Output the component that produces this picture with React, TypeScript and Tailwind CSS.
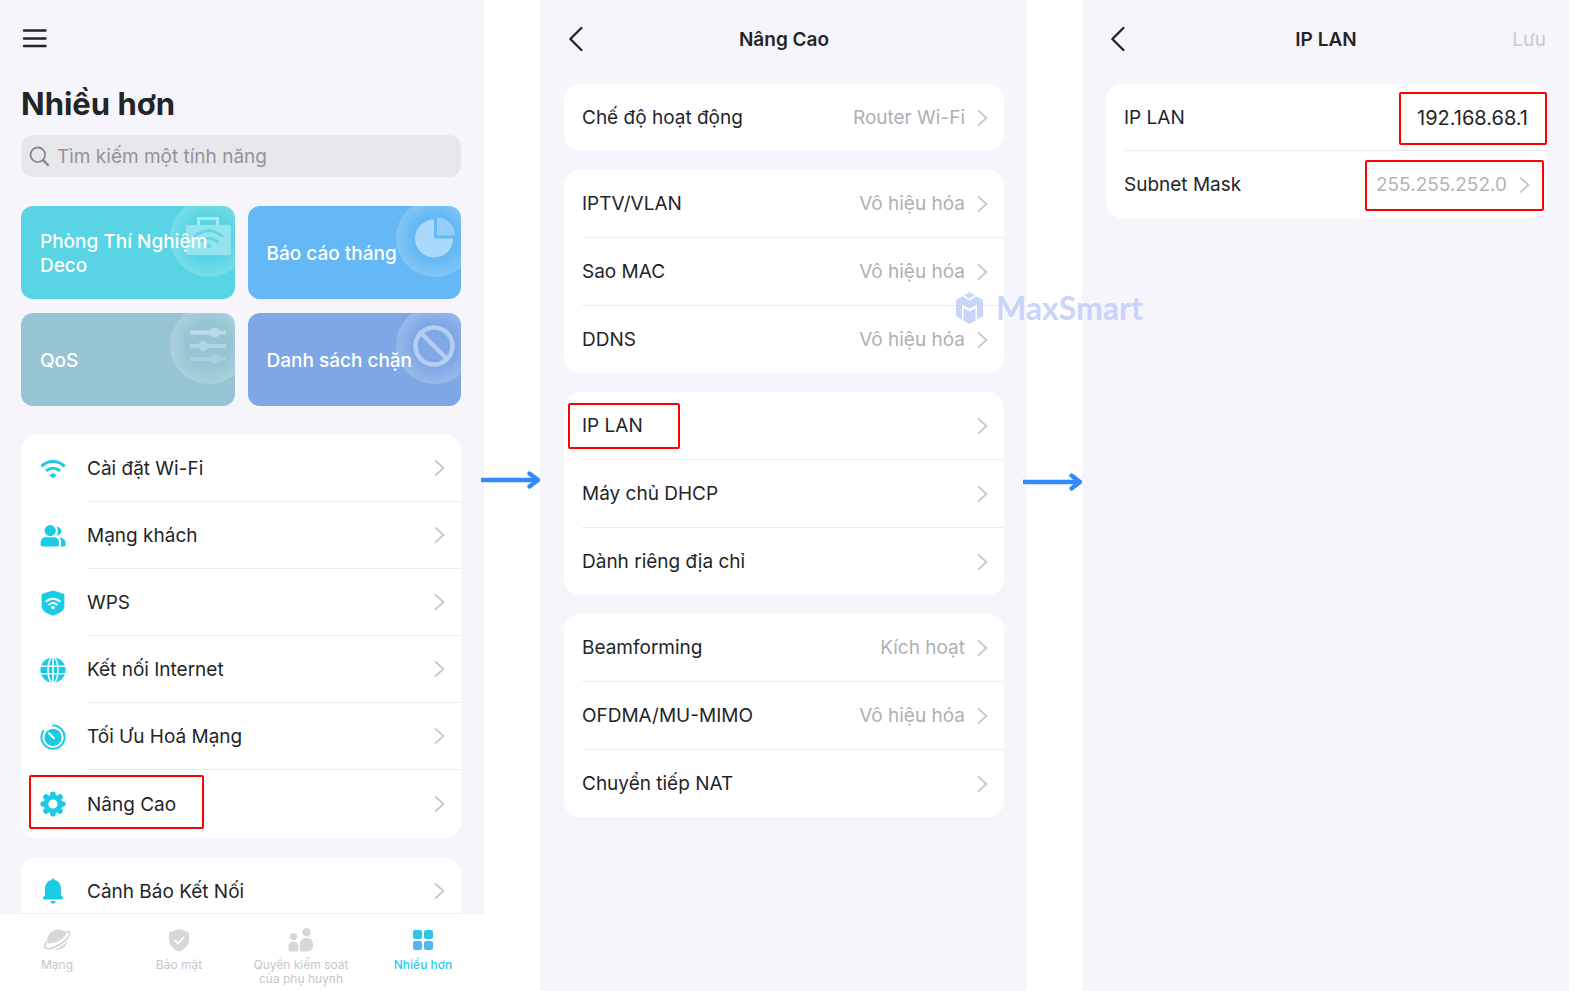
import React from "react";

type RowData = {
  label: string;
  value?: string;
  icon?: React.ReactNode;
  marked?: boolean;
};

const WifiIcon = () => (
  <svg width="26" height="26" viewBox="0 0 26 26" fill="none" stroke="#1acbe6" strokeWidth="3">
    <path d="M1.4 10.4C8.3 3.9 17.7 3.9 24.6 10.4" />
    <path d="M6 14.9C10.2 11.2 15.8 11.2 20 14.9" />
    <path d="M13 22.6L9.6 19.3C11.4 16.8 14.6 16.8 16.4 19.3Z" fill="#1acbe6" stroke="none" />
  </svg>
);

const GuestIcon = () => (
  <svg width="26" height="26" viewBox="0 0 26 26" fill="#1acbe6">
    <circle cx="10.2" cy="7.6" r="5.6" />
    <path d="M5.5 14.2H14.2C17.3 14.2 19 16.6 19 19.4V21.4C19 22.6 18.3 23.4 17.2 23.4H2.4C1.2 23.4 .6 22.6 .6 21.4V19.4C.6 16.6 2.5 14.2 5.5 14.2Z" />
    <path d="M16.8 3.6C19.4 3.9 21.3 5.8 21.3 8.2C21.3 10.6 19.4 12.4 16.6 12.6C18.1 10 18.2 6.4 16.8 3.6Z" />
    <path d="M19.4 14.4C23.2 14.6 25.6 16.8 25.6 20V21.6C25.6 22.8 25 23.4 23.8 23.4H20.6C21 22.6 21.1 21.8 21.1 20.8V19.4C21.1 17.4 20.6 15.7 19.4 14.4Z" />
  </svg>
);

const ShieldWifiIcon = () => (
  <svg width="26" height="26" viewBox="0 0 26 26" fill="none">
    <path d="M13 .5L23 3.6C24 4 24.4 4.6 24.4 5.6V16C24.4 21 18 24.2 13 25.8C8 24.2 1.6 21 1.6 16V5.6C1.6 4.6 2 4 3 3.6Z" fill="#1acbe6" />
    <path d="M5.6 11.8C10 7.7 16 7.7 20.4 11.8M8.7 14.9C11.3 12.6 14.7 12.6 17.3 14.9" stroke="#fff" strokeWidth="2" />
    <circle cx="13" cy="17.6" r="1.8" fill="#fff" />
  </svg>
);

const GlobeIcon = () => (
  <svg width="26" height="26" viewBox="0 0 26 26" fill="none">
    <circle cx="13" cy="13" r="12.6" fill="#1acbe6" />
    <g stroke="#fff" strokeWidth="1.5">
      <ellipse cx="13" cy="13" rx="5" ry="13" />
      <path d="M13 0V26M0 9.2H26M0 16.8H26" />
    </g>
  </svg>
);

const OptimizeIcon = () => (
  <svg width="26" height="26" viewBox="0 0 26 26" fill="none">
    <circle cx="13" cy="13.4" r="8.6" fill="#1acbe6" />
    <path d="M12.4 1.6A11.6 11.6 0 1 1 3.6 6.4" stroke="#1acbe6" strokeWidth="2" />
    <path d="M9.2 9.4L14 14.2" stroke="#fff" strokeWidth="2.2" strokeLinecap="round" />
  </svg>
);

const GearIcon = () => (
  <svg width="26" height="26" viewBox="0 0 26 26" fill="none">
    <g stroke="#1acbe6" strokeWidth="5.6" strokeLinecap="round">
      <path d="M13 3.2V22.8M3.2 13H22.8M6 6L20 20M20 6L6 20" />
    </g>
    <circle cx="13" cy="13" r="9.4" fill="#1acbe6" />
    <circle cx="13" cy="13" r="4.6" fill="#fff" />
  </svg>
);

const BellIcon = () => (
  <svg width="26" height="26" viewBox="0 0 26 26" fill="#1acbe6">
    <path d="M13 .4C13.9 .4 14.5 1 14.5 2C18.6 2.9 21 6.2 21 10.6V17.2L22.8 19.2C23.4 20.2 22.9 21.4 21.6 21.4H4.4C3.1 21.4 2.6 20.2 3.2 19.2L5 17.2V10.6C5 6.2 7.4 2.9 11.5 2C11.5 1 12.1 .4 13 .4Z" />
    <path d="M10.4 23H15.6C15.4 24.8 14.4 25.6 13 25.6S10.6 24.8 10.4 23Z" />
  </svg>
);

const Chevron = () => (
  <svg className="shrink-0" width="11" height="18" viewBox="0 0 11 18" fill="none" stroke="#c6c7ca" strokeWidth="1.8">
    <path d="M1 1.4L9.4 9L1 16.6" />
  </svg>
);

const BackIcon = () => (
  <svg width="15" height="26" viewBox="0 0 15 26" fill="none" stroke="#1f2528" strokeWidth="2.4" strokeLinecap="round" strokeLinejoin="round">
    <path d="M13.4 2L2.4 13L13.4 24" />
  </svg>
);

// Pale disc in the tile corner, the glyph is drawn over it
const TileArt = ({ id, children }: { id: string; children: React.ReactNode }) => (
  <svg className="absolute right-0 top-0" width="65" height="72" viewBox="0 0 65 72" fill="none">
    <defs>
      <radialGradient id={id}>
        <stop offset="0.55" stopColor="#fff" stopOpacity="0" />
        <stop offset="1" stopColor="#fff" stopOpacity="0.2" />
      </radialGradient>
    </defs>
    <circle cx="39" cy="32" r="39" fill={`url(#${id})`} />
    {children}
  </svg>
);

const tiles = [
  {
    label: "Phòng Thí Nghiệm Deco",
    bg: "bg-[#58d4e4]",
    art: (
      <TileArt id="lab">
        <path d="M28.5 20V12.5H47.5V20" stroke="#a9e9f2" strokeWidth="3" />
        <rect x="16" y="19" width="45" height="30" rx="3" fill="#94e4ee" />
        <path d="M24 31C33 22.5 44 22.5 53 31M29 36.5C35 31 42 31 48 36.5" stroke="#62d6e5" strokeWidth="3" />
        <circle cx="38.5" cy="40" r="2.5" fill="#62d6e5" />
      </TileArt>
    ),
  },
  {
    label: "Báo cáo tháng",
    bg: "bg-[#63b8f5]",
    art: (
      <TileArt id="report">
        <path d="M38 13.5A19 19 0 1 0 57 32.5H38Z" fill="#abd9fa" />
        <path d="M41 11.5A18 18 0 0 1 59 29.5H41Z" fill="#94cef9" />
      </TileArt>
    ),
  },
  {
    label: "QoS",
    bg: "bg-[#97c5d3]",
    art: (
      <TileArt id="qos">
        <g stroke="#bcdbe8" strokeWidth="4">
          <path d="M20 19.5H56" />
          <path d="M20 33H56" opacity="0.75" />
          <path d="M20 46H56" opacity="0.45" />
        </g>
        <circle cx="45" cy="19.5" r="5" fill="#bcdbe8" />
        <circle cx="33" cy="33" r="5" fill="#b3d5e3" />
        <circle cx="45" cy="46" r="5" fill="#a8cfdd" />
      </TileArt>
    ),
  },
  {
    label: "Danh sách chặn",
    bg: "bg-[#7fa7e5]",
    art: (
      <TileArt id="block">
        <circle cx="38" cy="33" r="18.5" stroke="#b5cdf3" strokeWidth="4.5" />
        <path d="M25 20L51 46" stroke="#b5cdf3" strokeWidth="4.5" />
      </TileArt>
    ),
  },
];

const menuRows: RowData[] = [
  { label: "Cài đặt Wi-Fi", icon: <WifiIcon /> },
  { label: "Mạng khách", icon: <GuestIcon /> },
  { label: "WPS", icon: <ShieldWifiIcon /> },
  { label: "Kết nối Internet", icon: <GlobeIcon /> },
  { label: "Tối Ưu Hoá Mạng", icon: <OptimizeIcon /> },
  { label: "Nâng Cao", icon: <GearIcon />, marked: true },
];

const advancedGroups: RowData[][] = [
  [{ label: "Chế độ hoạt động", value: "Router Wi-Fi" }],
  [
    { label: "IPTV/VLAN", value: "Vô hiệu hóa" },
    { label: "Sao MAC", value: "Vô hiệu hóa" },
    { label: "DDNS", value: "Vô hiệu hóa" },
  ],
  [
    { label: "IP LAN", marked: true },
    { label: "Máy chủ DHCP" },
    { label: "Dành riêng địa chỉ" },
  ],
  [
    { label: "Beamforming", value: "Kích hoạt" },
    { label: "OFDMA/MU-MIMO", value: "Vô hiệu hóa" },
    { label: "Chuyển tiếp NAT" },
  ],
];

const tabs = [
  {
    label: "Mạng",
    icon: (
      <svg width="28" height="24" viewBox="0 0 28 24" fill="none">
        <path d="M4.5 15C3 8 8 1.5 15 1.5C19 1.5 22 3 23.5 5.5C22 10 13 16.5 4.5 15Z" fill="#d5d7d8" />
        <path d="M22.5 4C27 2.6 28 5 25 9.4C20.5 15.4 9 21.6 3.6 20.4C.6 19.4 1.4 16.4 4 13.4" stroke="#d5d7d8" strokeWidth="1.8" />
        <path d="M12 21.5C17 19.5 21.5 16.5 24.5 13C23.5 18.5 18 22.8 12 21.5Z" fill="#d5d7d8" />
      </svg>
    ),
  },
  {
    label: "Bảo mật",
    icon: (
      <svg width="28" height="24" viewBox="0 0 28 24" fill="none">
        <path d="M14 1L23 4C23.6 4.2 24 4.7 24 5.4V12C24 18 19 21.5 14 23.5C9 21.5 4 18 4 12V5.4C4 4.7 4.4 4.2 5 4Z" fill="#d5d7d8" />
        <path d="M9.5 12L13 15.5L19 9" stroke="#fff" strokeWidth="1.8" />
      </svg>
    ),
  },
  {
    label: "Quyền kiểm soát của phụ huynh",
    icon: (
      <svg width="28" height="24" viewBox="0 0 28 24" fill="#d5d7d8">
        <circle cx="6.5" cy="8.5" r="3.6" />
        <circle cx="19.5" cy="4.2" r="4.2" />
        <path d="M1.5 22.5V19C1.5 15.5 3.5 13.4 6.5 13.4C9.3 13.4 11.4 15.5 11.4 19V22.5Q11.4 23.5 10.4 23.5H2.5Q1.5 23.5 1.5 22.5Z" />
        <path d="M12.8 22V16.5C12.8 12.6 15.5 9.8 19.5 9.8C23.5 9.8 26.2 12.8 26.2 16.7C26.2 20.6 23.6 23.5 20 23.5H14.3Q12.8 23.5 12.8 22Z" />
      </svg>
    ),
  },
  {
    label: "Nhiều hơn",
    active: true,
    icon: (
      <svg width="28" height="24" viewBox="0 0 28 24">
        <rect x="4" y="2" width="9" height="9" rx="2" fill="#2dc6e9" />
        <rect x="15" y="2" width="9" height="9" rx="2" fill="#2dc6e9" />
        <rect x="4" y="13" width="9" height="9" rx="2" fill="#52b6f5" />
        <rect x="15" y="13" width="9" height="9" rx="2" fill="#52b6f5" />
      </svg>
    ),
  },
];

function MenuRow({ row, divided }: { row: RowData; divided: boolean }) {
  return (
    <li className="relative">
      <button
        type="button"
        className={`flex w-full items-center pl-[19px] text-left ${divided ? "h-[67px]" : "h-[68px]"}`}
      >
        <span className="w-[47px] shrink-0">{row.icon}</span>
        <span
          className={`flex h-full flex-1 items-center justify-between pr-4 ${
            divided ? "border-b border-[#ececee]" : ""
          }`}
        >
          <span className="pt-0.5">{row.label}</span>
          <Chevron />
        </span>
      </button>
      {row.marked && (
        <span className="pointer-events-none absolute left-2 top-[5px] h-[54px] w-[175px] rounded-xs border-2 border-[#ff0000]" />
      )}
    </li>
  );
}

function SettingRow({ row, divided }: { row: RowData; divided: boolean }) {
  return (
    <li className="relative pl-[18px]">
      <button
        type="button"
        className={`flex w-full items-center gap-3 pr-4 text-left ${
          divided ? "h-[68px] border-b border-[#ececee]" : "h-[67px]"
        }`}
      >
        <span className="flex-1 pt-0.5">{row.label}</span>
        {row.value && <span className="pt-0.5 text-[#aeb0b3]">{row.value}</span>}
        <Chevron />
      </button>
      {row.marked && (
        <span className="pointer-events-none absolute left-1 top-[11px] h-[46px] w-28 rounded-xs border-2 border-[#ff0000]" />
      )}
    </li>
  );
}

function StepArrow({ className }: { className: string }) {
  return (
    <div className="relative z-10">
      <svg
        className={`absolute right-0 ${className}`}
        width="60"
        height="18"
        viewBox="0 0 60 18"
        fill="none"
        stroke="#338aff"
        strokeWidth="4.4"
      >
        <path d="M1 9H57" />
        <path d="M49.5 2.6L58 9L49.5 15.4" strokeLinecap="round" strokeLinejoin="round" />
      </svg>
    </div>
  );
}

function MoreScreen() {
  return (
    <section className="flex h-screen flex-col bg-[#f6f5fb]">
      <div className="flex-1 overflow-hidden pl-[21px] pr-[23px] pt-6">
        <button type="button" aria-label="Menu" className="block">
          <svg width="28" height="28" viewBox="0 0 28 28" stroke="#1f2528" strokeWidth="2.4" strokeLinecap="round">
            <path d="M3 6.5H24.5M3 14.5H24.5M3 22H24.5" />
          </svg>
        </button>
        <h1 className="mt-8 text-[31px] font-bold leading-10">Nhiều hơn</h1>
        <label className="mt-[11px] flex h-[42px] items-center gap-[7px] rounded-xl bg-[#e8e7ec] px-2">
          <svg width="21" height="21" viewBox="0 0 21 21" fill="none" stroke="#86888c" strokeWidth="1.8">
            <circle cx="8.8" cy="8.8" r="7.3" />
            <path d="M14 14L19.6 19.6" strokeWidth="2.4" />
          </svg>
          <input
            type="search"
            aria-label="Tìm kiếm"
            placeholder="Tìm kiếm một tính năng"
            className="flex-1 bg-transparent pt-0.5 outline-none placeholder:text-[#929398]"
          />
        </label>

        <div className="mt-[29px] grid grid-cols-2 gap-x-[13px] gap-y-3.5">
          {tiles.map((tile) => (
            <button
              key={tile.label}
              type="button"
              className={`relative flex h-[93px] items-center overflow-hidden rounded-xl pl-[19px] pr-2 text-left font-medium leading-6 text-white ${tile.bg}`}
            >
              {tile.art}
              <span className="relative pt-0.5">{tile.label}</span>
            </button>
          ))}
        </div>

        <ul className="mt-[29px] rounded-2xl bg-white">
          {menuRows.map((row, i) => (
            <MenuRow key={row.label} row={row} divided={i < menuRows.length - 1} />
          ))}
        </ul>
        <ul className="mt-[19px] rounded-2xl bg-white">
          <MenuRow row={{ label: "Cảnh Báo Kết Nối", icon: <BellIcon /> }} divided={false} />
        </ul>
      </div>

      <nav className="-ml-1 grid h-[78px] shrink-0 grid-cols-4 border-t border-[#f1f1f4] bg-white">
        {tabs.map((tab) => (
          <button
            key={tab.label}
            type="button"
            className={`flex flex-col items-center px-3 pt-3.5 text-xs leading-3.5 ${
              tab.active ? "font-medium text-[#2fc8ea]" : "text-[#c6c7ca]"
            }`}
          >
            {tab.icon}
            <span className="mt-1.5">{tab.label}</span>
          </button>
        ))}
      </nav>
    </section>
  );
}

function ScreenHeader({ title, action }: { title: string; action?: string }) {
  return (
    <header className="grid h-[84px] grid-cols-[1fr_auto_1fr] items-start pt-[26px] leading-7">
      <button type="button" aria-label="Quay lại" className="ml-1 justify-self-start">
        <BackIcon />
      </button>
      <h2 className="font-semibold">{title}</h2>
      {action && (
        <button type="button" className="justify-self-end text-[#c9c9ce]">
          {action}
        </button>
      )}
    </header>
  );
}

function AdvancedScreen() {
  return (
    <section className="bg-[#f6f5fb] pl-6 pr-[23px]">
      <ScreenHeader title="Nâng Cao" />
      <div className="flex flex-col gap-[19px]">
        {advancedGroups.map((group, g) => (
          <ul key={g} className="rounded-2xl bg-white">
            {group.map((row, i) => (
              <SettingRow key={row.label} row={row} divided={i < group.length - 1} />
            ))}
          </ul>
        ))}
      </div>
    </section>
  );
}

function LanScreen() {
  return (
    <section className="bg-[#f6f5fb] pl-6 pr-[23px]">
      <ScreenHeader title="IP LAN" action="Lưu" />
      <div className="rounded-2xl bg-white pl-[18px]">
        <div className="relative flex h-[67px] items-center border-b border-[#ececee] pr-[18px]">
          <label htmlFor="ip-lan" className="flex-1 pt-0.5">
            IP LAN
          </label>
          <input
            id="ip-lan"
            type="text"
            defaultValue="192.168.68.1"
            className="w-36 bg-transparent pt-0.5 text-right text-xl outline-none"
          />
          <span className="pointer-events-none absolute -right-px top-2 h-[53px] w-[148px] rounded-xs border-2 border-[#ff0000]" />
        </div>
        <button type="button" className="relative flex h-[67px] w-full items-center gap-3 pr-4 text-left">
          <span className="flex-1 pt-0.5">Subnet Mask</span>
          <span className="pt-0.5 text-[#b4b5b8]">255.255.252.0</span>
          <Chevron />
          <span className="pointer-events-none absolute right-0.5 top-[9px] h-[51px] w-[179px] rounded-xs border-2 border-[#ff0000]" />
        </button>
      </div>
    </section>
  );
}

function Watermark() {
  return (
    <div className="pointer-events-none absolute left-[955px] top-[290px] z-20 flex items-center gap-3 text-[#b9c8fb] opacity-75">
      <svg width="29" height="34" viewBox="0 0 29 34" fill="currentColor">
        <path d="M14.5 1L20 4.2L14.5 7.4L9 4.2Z" />
        <path d="M7.5 5.2L14.5 9.2L21.5 5.2L28 9V25L22 28.5V13.5L14.5 17.8L7 13.5V28.5L1 25V9Z" />
        <path d="M8.5 17L14.5 20.4L20.5 17V29.5L14.5 33L8.5 29.5Z" />
      </svg>
      <span className="font-['Lato',sans-serif] text-[32px] font-bold leading-9">MaxSmart</span>
    </div>
  );
}

export default function App() {
  return (
    <main className="relative grid min-h-screen grid-cols-[484fr_56px_487fr_55px_487fr] bg-white pr-2 font-['Inter','Liberation_Sans',sans-serif] text-[19px] text-[#1f2528]">
      <MoreScreen />
      <StepArrow className="top-[471px]" />
      <AdvancedScreen />
      <StepArrow className="top-[473px]" />
      <LanScreen />
      <Watermark />
    </main>
  );
}
